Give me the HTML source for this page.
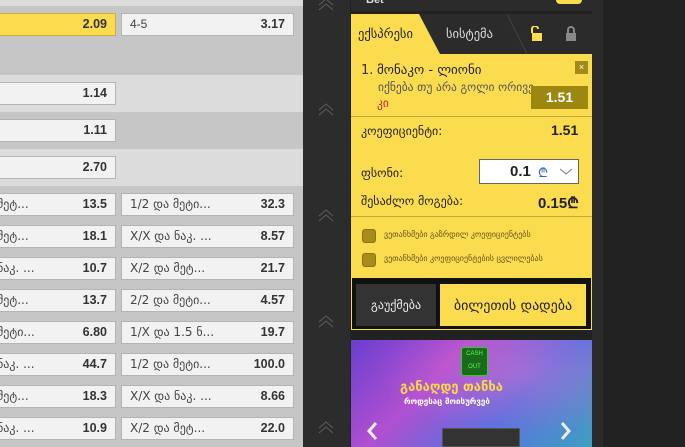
<!DOCTYPE html><html><head><meta charset="utf-8"><style>
*{margin:0;padding:0;box-sizing:border-box}
body{width:685px;height:447px;overflow:hidden;background:#222;font-family:"Liberation Sans","DejaVu Sans",sans-serif;position:relative}
.a{position:absolute}
.left{left:0;top:0;width:303px;height:447px;background:#c6c6c6}
.box{position:absolute;height:23px;background:#f2f2f2;border:1px solid #b4b4b4;font-size:12px;color:#444;line-height:21px}
.box b{position:absolute;right:8px;top:0;color:#333;font-weight:bold;font-size:12.5px;font-family:"Liberation Sans",sans-serif}
.box span{position:absolute;left:8px;top:0}
.y{background:#fbdc4f}
.tk{font-family:"DejaVu Sans",sans-serif}
</style></head><body>
<div class="a left"></div>
<div class="a" style="left:0;top:0;width:303px;height:6px;background:#dcdcdc"></div>
<div class="a" style="left:0;top:75px;width:303px;height:37px;background:#dcdcdc"></div>
<div class="a" style="left:0;top:149px;width:303px;height:37px;background:#dcdcdc"></div>
<div class="box" style="left:-2px;top:13px;width:118px;background:#fbdc4f;border-color:#c8b040"><b>2.09</b></div>
<div class="box" style="left:121px;top:13px;width:173px"><span>4-5</span><b>3.17</b></div>
<div class="box" style="left:-2px;top:82px;width:118px"><b>1.14</b></div>
<div class="box" style="left:-2px;top:119px;width:118px"><b>1.11</b></div>
<div class="box" style="left:-2px;top:156px;width:118px"><b>2.70</b></div>

<div class="box tk" style="left:-2px;top:193px;width:118px"><span style="left:-2px">მეტ...</span><b>13.5</b></div>
<div class="box tk" style="left:121px;top:193px;width:173px"><span>1/2 და მეტი...</span><b>32.3</b></div>
<div class="box tk" style="left:-2px;top:225px;width:118px"><span style="left:-2px">მეტ...</span><b>18.1</b></div>
<div class="box tk" style="left:121px;top:225px;width:173px"><span>X/X და ნაკ. ...</span><b>8.57</b></div>
<div class="box tk" style="left:-2px;top:257px;width:118px"><span style="left:-2px">ნაკ. ...</span><b>10.7</b></div>
<div class="box tk" style="left:121px;top:257px;width:173px"><span>X/2 და მეტ...</span><b>21.7</b></div>
<div class="box tk" style="left:-2px;top:289px;width:118px"><span style="left:-2px">მეტ...</span><b>13.7</b></div>
<div class="box tk" style="left:121px;top:289px;width:173px"><span>2/2 და მეტი...</span><b>4.57</b></div>
<div class="box tk" style="left:-2px;top:321px;width:118px"><span style="left:-2px">მეტი...</span><b>6.80</b></div>
<div class="box tk" style="left:121px;top:321px;width:173px"><span>1/X და 1.5 ნ...</span><b>19.7</b></div>
<div class="box tk" style="left:-2px;top:353px;width:118px"><span style="left:-2px">ნაკ. ...</span><b>44.7</b></div>
<div class="box tk" style="left:121px;top:353px;width:173px"><span>1/2 და მეტი...</span><b>100.0</b></div>
<div class="box tk" style="left:-2px;top:385px;width:118px"><span style="left:-2px">მეტ...</span><b>18.3</b></div>
<div class="box tk" style="left:121px;top:385px;width:173px"><span>X/X და ნაკ. ...</span><b>8.66</b></div>
<div class="box tk" style="left:-2px;top:417px;width:118px"><span style="left:-2px">ნაკ. ...</span><b>10.9</b></div>
<div class="box tk" style="left:121px;top:417px;width:173px"><span>X/2 და მეტ...</span><b>22.0</b></div>

<div class="a" style="left:303px;top:0;width:47px;height:447px;background:#2c2c2c"></div>
<svg class="a" style="left:303px;top:0" width="47" height="447" fill="none" stroke="#5e5e5e" stroke-width="1">
<path d="M16 5l7-6 7 6M16 10l7-6 7 6"/>
<path d="M16 110l7-6 7 6M16 115l7-6 7 6"/>
<path d="M16 216l7-6 7 6M16 221l7-6 7 6"/>
<path d="M16 322l7-6 7 6M16 327l7-6 7 6"/>
<path d="M16 428l7-6 7 6M16 433l7-6 7 6"/>
</svg>
<div class="a" style="left:592px;top:0;width:11px;height:447px;background:#2b2b2b"></div>

<div class="a" style="left:351px;top:0;width:241px;height:11px;background:#2b2b2b"></div>
<div class="a" style="left:366px;top:-6px;color:#ddd;font-size:11px;font-weight:bold">Bet</div>
<div class="a" style="left:556px;top:-4px;width:26px;height:8px;border-radius:4px;background:#fbdc4f"></div>
<div class="a" style="left:351px;top:14px;width:241px;height:40px;background:#2b2b2b"></div>
<svg class="a" style="left:351px;top:14px" width="241" height="40"><polygon points="0,0 68,0 89,40 0,40" fill="#fbdc4f"/><line x1="156" y1="0" x2="176" y2="40" stroke="#444"/></svg>
<div class="a tk" style="left:358px;top:26px;font-size:12.5px;color:#222">ექსპრესი</div>
<div class="a tk" style="left:446px;top:26px;font-size:12.5px;color:#ddd">სისტემა</div>
<svg class="a" style="left:530px;top:26px" width="50" height="16"><rect x="2" y="7" width="10" height="8" fill="#fbdc4f"/><path d="M2 7V3a3 3 0 0 1 6 0" stroke="#fbdc4f" stroke-width="2" fill="none"/><rect x="36" y="7" width="10" height="8" fill="#888"/><path d="M38 7V4a3 3 0 0 1 6 0v3" stroke="#888" stroke-width="2" fill="none"/></svg>

<div class="a y" style="left:351px;top:54px;width:241px;height:224px"></div>
<div class="a" style="left:351px;top:116px;width:241px;height:1px;background:#c2a93e"></div>
<div class="a" style="left:351px;top:216px;width:241px;height:1px;background:#c2a93e"></div>
<div class="a tk" style="left:361px;top:63px;font-size:13px;color:#333">1.</div>
<div class="a tk" style="left:377px;top:63px;font-size:13px;color:#222">მონაკო - ლიონი</div>
<div class="a tk" style="left:378px;top:80px;font-size:11.5px;color:#555;white-space:nowrap">იქნება თუ არა გოლი ორივე ...</div>
<div class="a tk" style="left:377px;top:96px;font-size:11.5px;color:#d0203a">კი</div>
<div class="a" style="left:575px;top:61px;width:13px;height:13px;background:#a08a1a;color:#fff;font-size:9px;text-align:center;line-height:12px">×</div>
<div class="a" style="left:531px;top:86px;width:57px;height:23px;background:#9e8711;color:#fff;font-weight:bold;font-size:14px;line-height:23px;text-align:center">1.51</div>
<div class="a tk" style="left:361px;top:124px;font-size:12px;color:#222">კოეფიციენტი:</div>
<div class="a" style="left:551px;top:122px;font-size:14px;font-weight:bold;color:#222">1.51</div>
<div class="a tk" style="left:361px;top:166px;font-size:12px;color:#222">ფსონი:</div>
<div class="a" style="left:479px;top:159px;width:100px;height:25px;background:#fff;border:1px solid #666"></div>
<div class="a" style="left:510px;top:163px;font-size:15px;font-weight:bold;color:#222">0.1</div>
<div class="a tk" style="left:538px;top:163px;font-size:13px;color:#2a6ab0">₾</div>
<svg class="a" style="left:559px;top:168px" width="14" height="8"><path d="M1 1l6 5 6-5" stroke="#777" fill="none"/></svg>
<div class="a tk" style="left:361px;top:194px;font-size:12px;color:#222">შესაძლო მოგება:</div>
<div class="a" style="left:538px;top:193px;font-size:15px;font-weight:bold;color:#222">0.15<span class="tk">₾</span></div>
<div class="a" style="left:362px;top:229px;width:14px;height:14px;border-radius:3px;background:#a88c1a;border:1px solid #8a7410"></div>
<div class="a" style="left:362px;top:253px;width:14px;height:14px;border-radius:3px;background:#a88c1a;border:1px solid #8a7410"></div>
<div class="a tk" style="left:384px;top:230px;font-size:8px;color:#665520;white-space:nowrap">ვეთანხმები გაზრდილ კოეფიციენტებს</div>
<div class="a tk" style="left:384px;top:254px;font-size:8px;color:#665520;white-space:nowrap">ვეთანხმები კოეფიციენტების ცვლილებას</div>
<div class="a" style="left:351px;top:278px;width:241px;height:52px;background:#111;border:1px solid #fbdc4f;border-top:none"></div>
<div class="a" style="left:356px;top:284px;width:80px;height:42px;background:#333;color:#eee;font-size:12px;line-height:42px;text-align:center"><span class="tk">გაუქმება</span></div>
<div class="a y" style="left:440px;top:284px;width:146px;height:42px;color:#222;font-size:14px;line-height:42px;text-align:center"><span class="tk">ბილეთის დადება</span></div>

<div class="a" style="left:351px;top:340px;width:241px;height:107px;background:linear-gradient(135deg,#6a3fd0 0%,#b050d0 35%,#5a70e0 65%,#40a0c0 100%)"></div>
<div class="a" style="left:351px;top:340px;width:241px;height:107px;background:radial-gradient(ellipse at 70% 30%,rgba(255,120,200,.35),transparent 60%)"></div>
<div class="a" style="left:461px;top:347px;width:27px;height:29px;background:#1a6a1a;border:1px solid #3c3;border-radius:3px;color:#5f5;font-size:6px;text-align:center;line-height:13px">CASH<br>OUT</div>
<div class="a tk" style="left:400px;top:380px;font-size:13px;font-weight:bold;color:#f7d84a">განაღდე თანხა</div>
<div class="a tk" style="left:404px;top:397px;font-size:8px;font-weight:bold;color:#fff">როდესაც მოისურვებ</div>
<div class="a" style="left:442px;top:428px;width:78px;height:19px;background:#333;border:1px solid #555"></div>
<svg class="a" style="left:365px;top:420px" width="210" height="22" fill="none" stroke="#eee" stroke-width="3"><path d="M11 3L4 11l7 8"/><path d="M197 3l7 8-7 8"/></svg>
</body></html>
